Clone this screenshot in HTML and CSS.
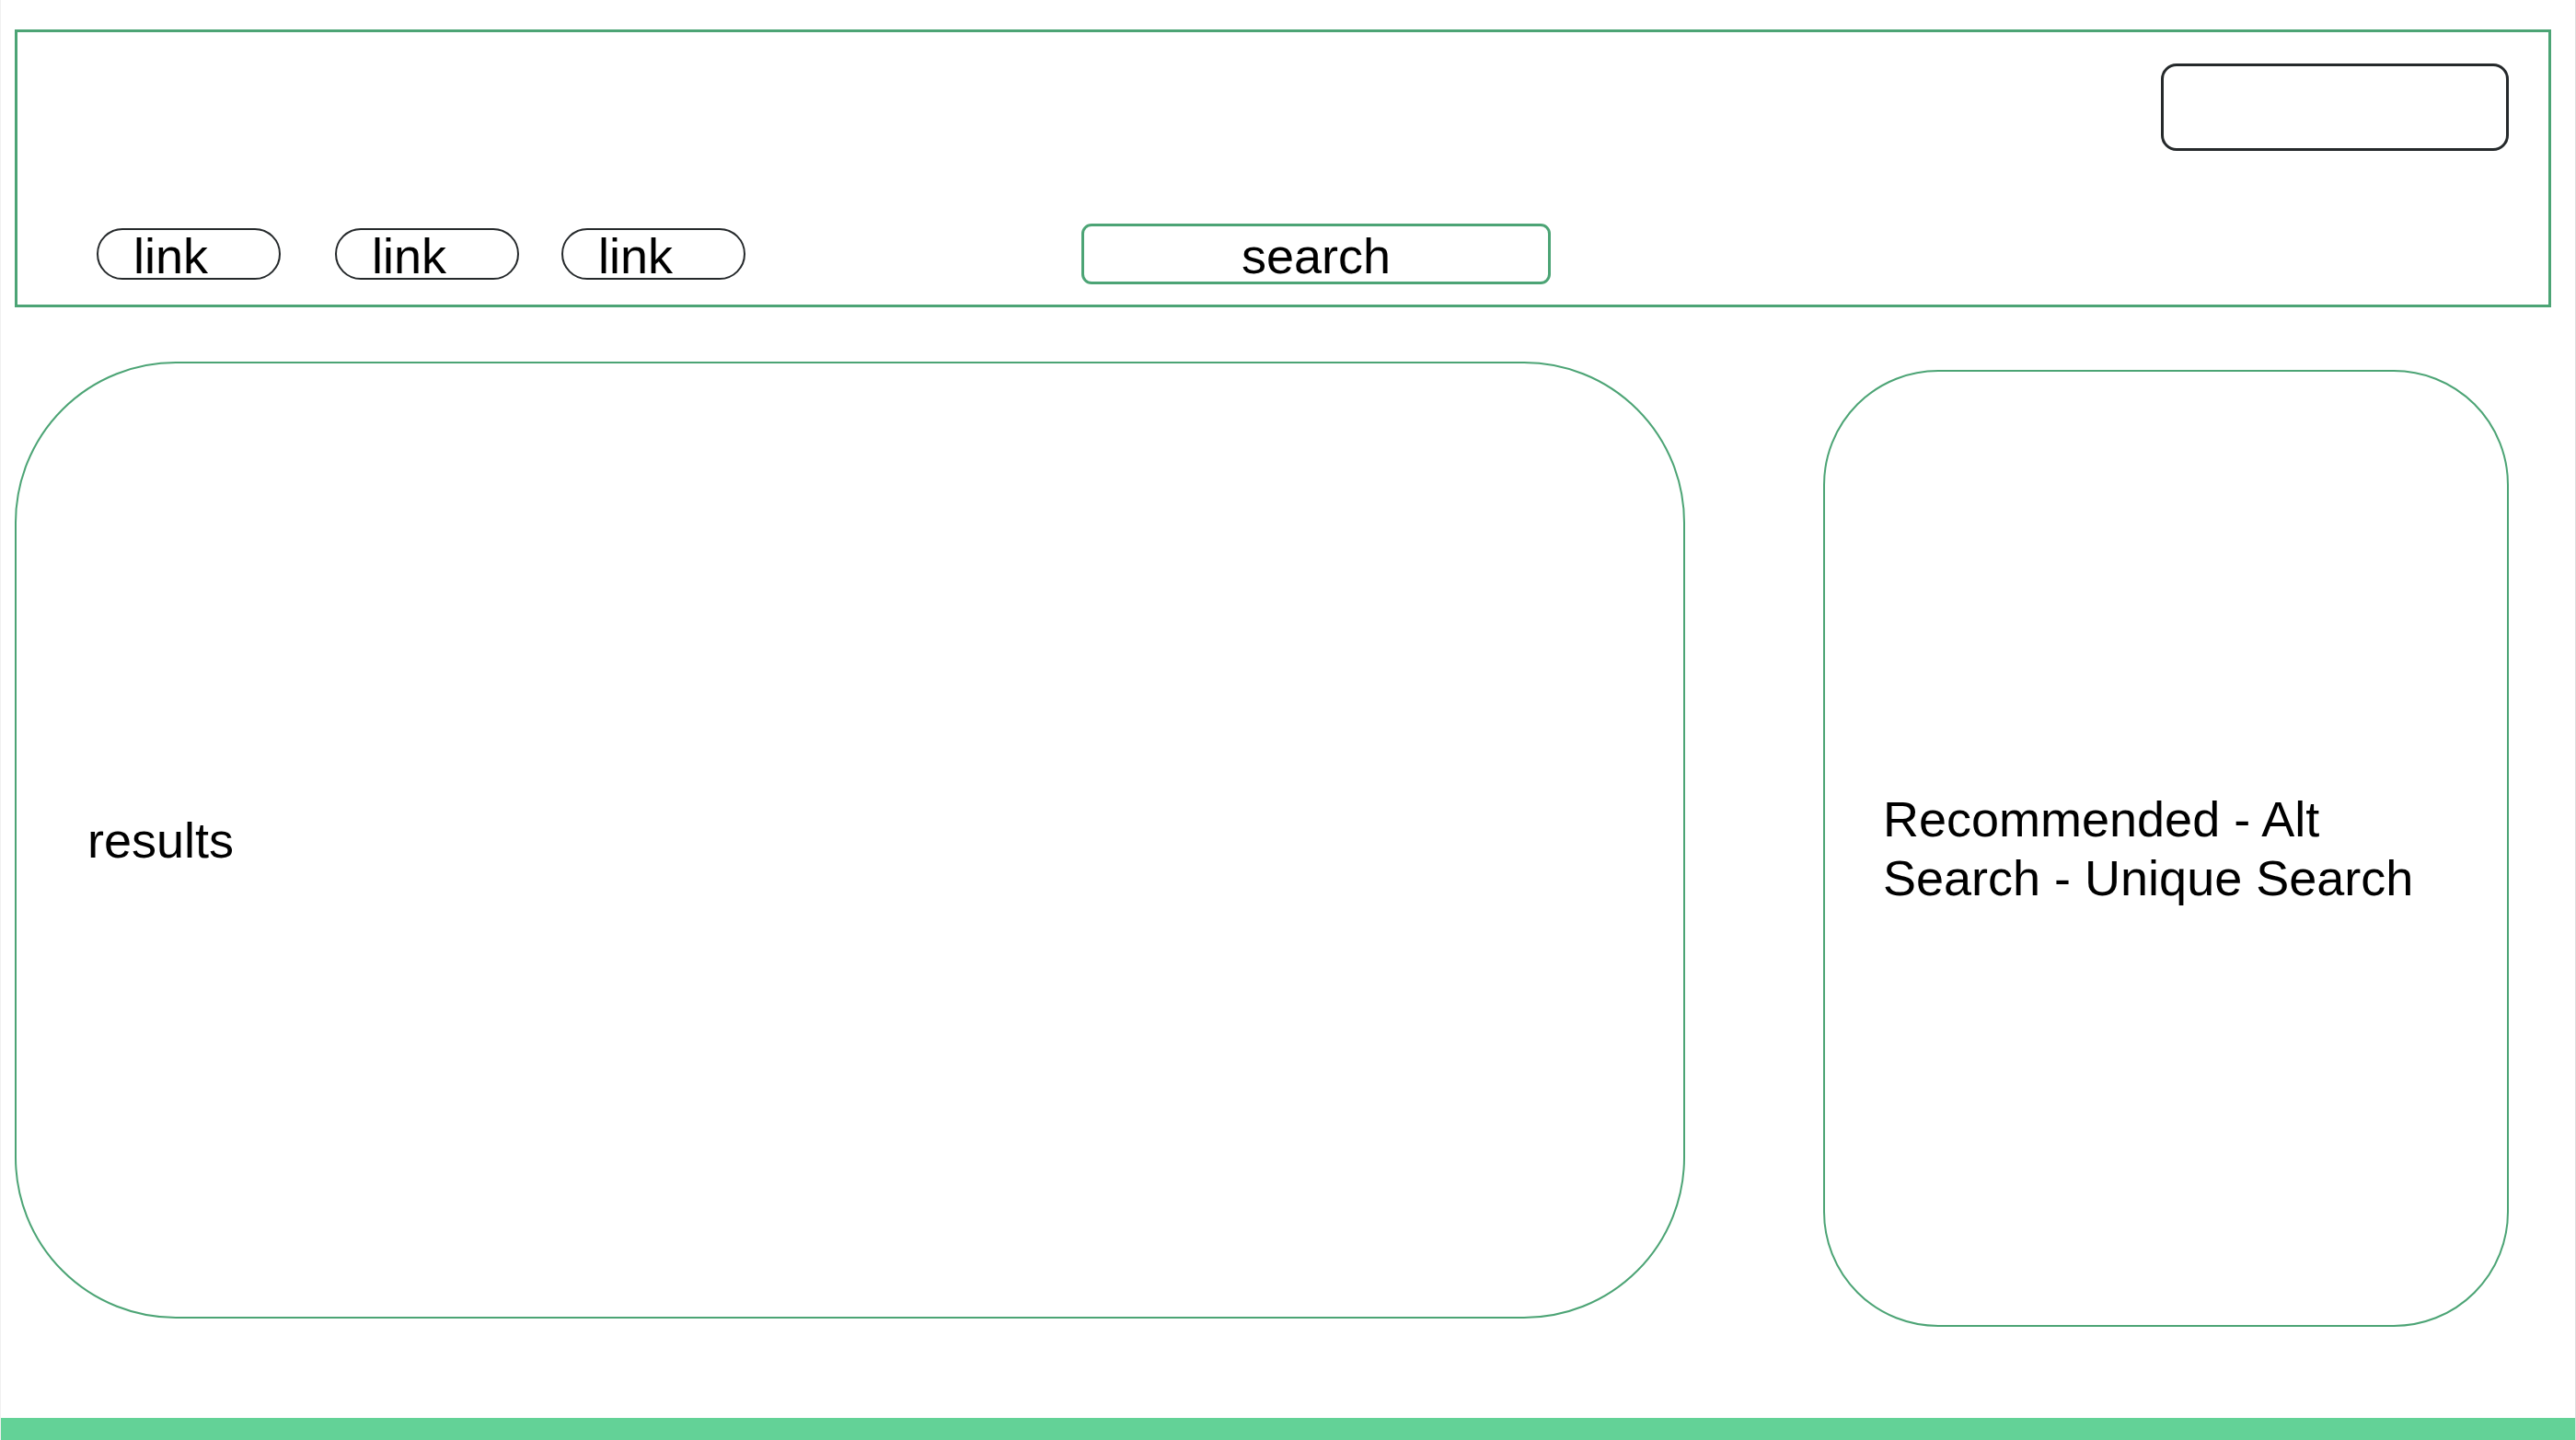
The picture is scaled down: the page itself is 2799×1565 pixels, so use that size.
FILE: index.html
```html
<!DOCTYPE html>
<html lang="en">
<head>
<meta charset="utf-8">
<title>Search wireframe</title>
<link rel="stylesheet" href="styles.css">
</head>
<body>
<div class="page">
  <div class="content">
    <header class="header">
      <div class="header-top">
        <div class="account"></div>
      </div>
      <nav class="nav">
        <a class="pill" href="#">link</a>
        <a class="pill" href="#">link</a>
        <a class="pill" href="#">link</a>
        <div class="search">search</div>
      </nav>
    </header>
    <main class="main">
      <section class="results">results</section>
      <aside class="aside">Recommended - Alt Search - Unique Search</aside>
    </main>
  </div>
  <footer class="bar"></footer>
</div>
</body>
</html>
```

FILE: styles.css
```css
html, body {
  margin: 0;
  padding: 0;
  background: #ffffff;
}

body {
  font-family: "Liberation Sans", Arial, sans-serif;
  color: #000000;
}

.page {
  height: 100vh;
  box-sizing: border-box;
  display: flex;
  flex-direction: column;
  border-left: 1px solid #f0f0f0;
  border-right: 1px solid #dcdcdc;
}

.content {
  flex: 1;
  padding: 32px 26px 0 15px;
}

.header {
  box-sizing: border-box;
  height: 302px;
  border: 3px solid #4ca475;
  padding: 34px 43px 22px 0;
  display: flex;
  flex-direction: column;
}

.header-top {
  display: flex;
  justify-content: flex-end;
}

.account {
  box-sizing: border-box;
  width: 378px;
  height: 95px;
  border: 3px solid #25292b;
  border-radius: 17px;
}

.nav {
  display: flex;
  align-items: center;
  margin-top: 79px;
  padding-left: 86px;
}

.pill {
  box-sizing: border-box;
  width: 200px;
  height: 56px;
  border: 2px solid #25292b;
  border-radius: 28px;
  padding-left: 38px;
  font-size: 54px;
  line-height: 56px;
  color: #000000;
  text-decoration: none;
}

.pill:nth-child(1) {
  margin-right: 59px;
}

.pill:nth-child(2) {
  margin-right: 46px;
}

.search {
  box-sizing: border-box;
  width: 510px;
  height: 66px;
  margin-left: 365px;
  border: 3px solid #4ca475;
  border-radius: 11px;
  font-size: 54px;
  line-height: 65px;
  text-align: center;
}

.main {
  display: flex;
  align-items: flex-start;
  gap: 150px;
  margin-top: 59px;
}

.results {
  box-sizing: border-box;
  width: 1815px;
  height: 1040px;
  border: 2px solid #4ca475;
  border-radius: 175px;
  padding-left: 77px;
  display: flex;
  align-items: center;
  font-size: 54px;
  line-height: 64px;
}

.aside {
  box-sizing: border-box;
  width: 745px;
  height: 1040px;
  margin-top: 9px;
  border: 2px solid #4ca475;
  border-radius: 125px;
  padding: 0 62px 0 63px;
  display: flex;
  align-items: center;
  font-size: 54px;
  line-height: 64px;
}

.bar {
  height: 24px;
  background: #63d297;
  flex-shrink: 0;
}
```
